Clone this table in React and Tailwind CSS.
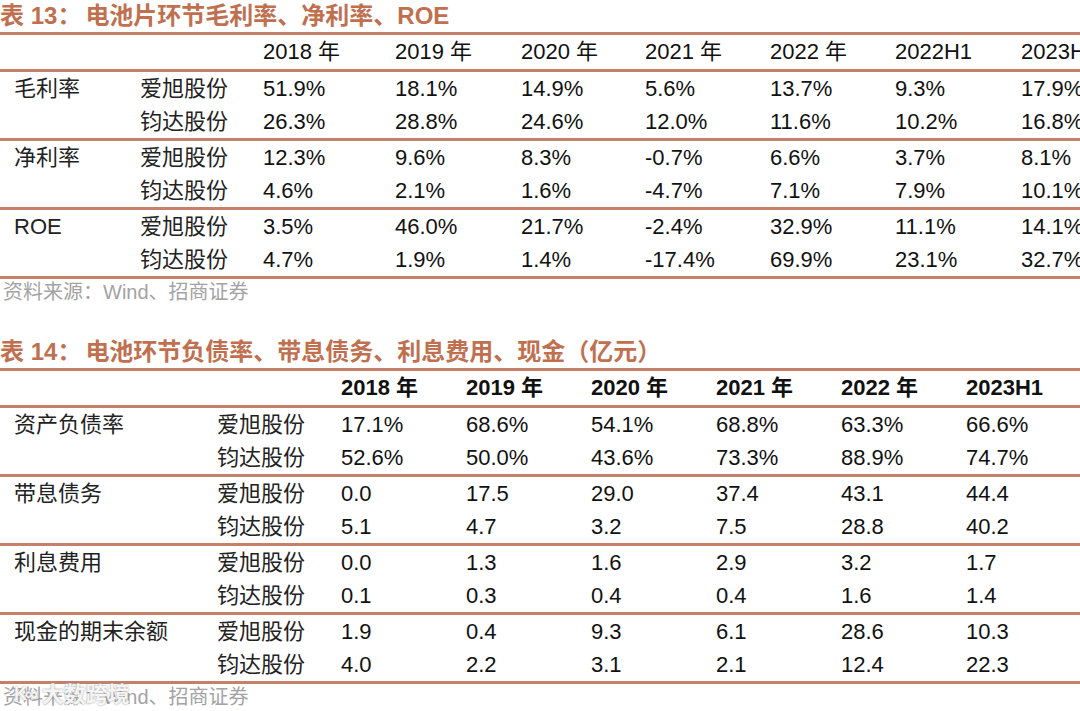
import React from 'react';

const FONT = "font-['Liberation_Sans','Noto_Sans_CJK_SC',sans-serif]";

const t13Years = ['2018 年', '2019 年', '2020 年', '2021 年', '2022 年', '2022H1', '2023H1'];
const t13Groups = [
  {
    label: '毛利率',
    rows: [
      ['爱旭股份', ['51.9%', '18.1%', '14.9%', '5.6%', '13.7%', '9.3%', '17.9%']],
      ['钧达股份', ['26.3%', '28.8%', '24.6%', '12.0%', '11.6%', '10.2%', '16.8%']],
    ],
  },
  {
    label: '净利率',
    rows: [
      ['爱旭股份', ['12.3%', '9.6%', '8.3%', '-0.7%', '6.6%', '3.7%', '8.1%']],
      ['钧达股份', ['4.6%', '2.1%', '1.6%', '-4.7%', '7.1%', '7.9%', '10.1%']],
    ],
  },
  {
    label: 'ROE',
    rows: [
      ['爱旭股份', ['3.5%', '46.0%', '21.7%', '-2.4%', '32.9%', '11.1%', '14.1%']],
      ['钧达股份', ['4.7%', '1.9%', '1.4%', '-17.4%', '69.9%', '23.1%', '32.7%']],
    ],
  },
];

const t14Years = ['2018 年', '2019 年', '2020 年', '2021 年', '2022 年', '2023H1'];
const t14Groups = [
  {
    label: '资产负债率',
    rows: [
      ['爱旭股份', ['17.1%', '68.6%', '54.1%', '68.8%', '63.3%', '66.6%']],
      ['钧达股份', ['52.6%', '50.0%', '43.6%', '73.3%', '88.9%', '74.7%']],
    ],
  },
  {
    label: '带息债务',
    rows: [
      ['爱旭股份', ['0.0', '17.5', '29.0', '37.4', '43.1', '44.4']],
      ['钧达股份', ['5.1', '4.7', '3.2', '7.5', '28.8', '40.2']],
    ],
  },
  {
    label: '利息费用',
    rows: [
      ['爱旭股份', ['0.0', '1.3', '1.6', '2.9', '3.2', '1.7']],
      ['钧达股份', ['0.1', '0.3', '0.4', '0.4', '1.6', '1.4']],
    ],
  },
  {
    label: '现金的期末余额',
    rows: [
      ['爱旭股份', ['1.9', '0.4', '9.3', '6.1', '28.6', '10.3']],
      ['钧达股份', ['4.0', '2.2', '3.1', '2.1', '12.4', '22.3']],
    ],
  },
];

const Rule = () => <div className="h-[3px] w-full bg-[#c4806a]" />;

const Title = ({ num, text, className = '' }) => (
  <div className={`h-[32px] flex items-center whitespace-nowrap text-[24px] font-bold text-[#c0704f] ${className}`}>
    <span>表 {num}：</span>
    <span className="ml-[4px]">{text}</span>
  </div>
);

const Source = () => (
  <div className="h-[26px] flex items-center pl-[3px] text-[20px] text-[#a3a3a3] whitespace-nowrap">
    资料来源：Wind、招商证券
  </div>
);

const Table = ({ cols, years, groups, boldHead }) => (
  <div>
    <Rule />
    <div className={`grid ${cols} h-[34px] items-center pl-[14px] pb-[3px] text-[22px] text-[#111] whitespace-nowrap overflow-hidden ${boldHead ? 'font-bold' : ''}`}>
      <div />
      <div />
      {years.map((y) => (
        <div key={y}>{y}</div>
      ))}
    </div>
    {groups.map((g) => (
      <div key={g.label}>
        <Rule />
        {g.rows.map(([co, vals], i) => (
          <div key={co} className={`grid ${cols} h-[33px] items-center pl-[14px] text-[22px] text-[#111] whitespace-nowrap overflow-hidden`}>
            <div className="text-[#222]">{i === 0 ? g.label : ''}</div>
            <div className="text-[#222]">{co}</div>
            {vals.map((v, j) => (
              <div key={j}>{v}</div>
            ))}
          </div>
        ))}
      </div>
    ))}
    <Rule />
  </div>
);

export default function App() {
  return (
    <div className={`relative w-[1080px] h-[711px] overflow-hidden bg-white ${FONT}`}>
      <Title num="13" text="电池片环节毛利率、净利率、ROE" />
      <Table
        cols="grid-cols-[126px_123px_132px_126px_124px_125px_125px_126px_100px]"
        years={t13Years}
        groups={t13Groups}
      />
      <Source />
      <Title num="14" text="电池环节负债率、带息债务、利息费用、现金（亿元）" className="mt-[31px]" />
      <Table
        cols="grid-cols-[203px_124px_125px_125px_125px_125px_125px_1fr]"
        years={t14Years}
        groups={t14Groups}
        boldHead
      />
      <Source />
      <div className="absolute left-[14px] top-[678px] flex items-center gap-[6px] text-[22px] font-bold text-white/90 [text-shadow:0_0_2px_#8a8a8a]">
        <span className="text-[18px] tracking-[-2px]">K∞</span>
        <span>大数跨境</span>
      </div>
    </div>
  );
}
